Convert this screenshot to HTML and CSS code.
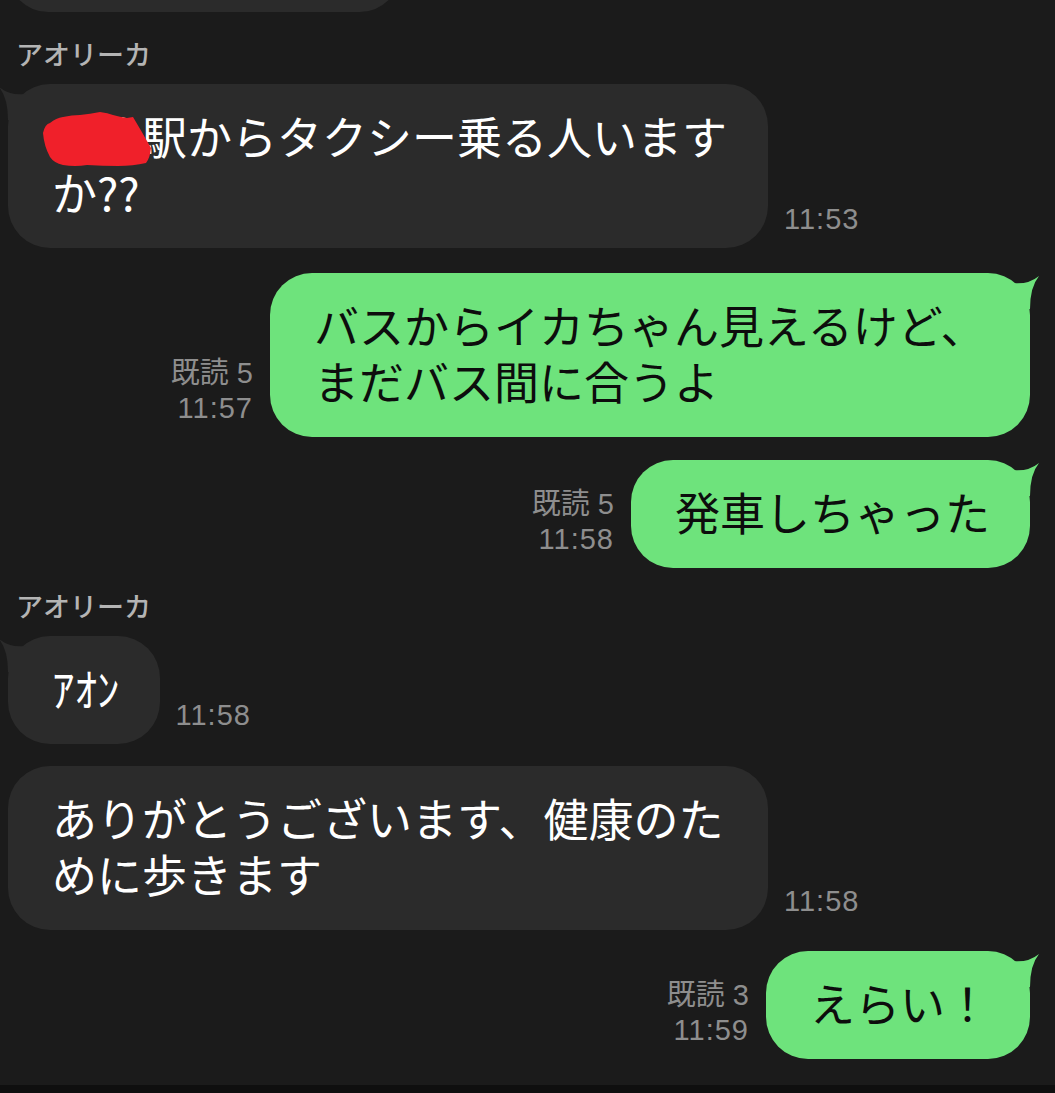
FILE: index.html
```html
<!DOCTYPE html>
<html lang="ja">
<head>
    <meta charset="UTF-8">
    <meta name="viewport" content="width=device-width, initial-scale=1.0">
    <title>トーク</title>
    <link rel="stylesheet" href="styles.css">
</head>
<body>
    <div class="chat">
        <div class="row left">
            <div class="bubble stub"></div>
        </div>

        <div class="name first">アオリーカ</div>
        <div class="row left">
            <div class="bubble">
                <svg class="tail tail-left" viewBox="0 0 50 40" width="50" height="40"><path d="M28 10 Q12 12 1 3 Q10 14 10 36 L28 36 Z"/></svg>
                ○○駅からタクシー乗る人いますか??
                <svg class="redact" viewBox="0 0 120 64" width="120" height="64"><path d="M5 25 Q7 16 12 15 Q18 10 25 9 Q34 7 42 7 Q52 6 62 4 Q70 5 75 7 Q82 9 89 10 L95 9 Q104 24 113 40 Q112 50 108 55 Q95 58 80 58 Q65 58 49 57 Q37 59 25 57 Q16 55 12 49 Q6 38 5 25 Z"/></svg>
            </div>
            <div class="meta">11:53</div>
        </div>

        <div class="row right gap-25">
            <div class="meta"><div class="read">既読 5</div><div>11:57</div></div>
            <div class="bubble green">
                <svg class="tail tail-right" viewBox="0 0 50 40" width="50" height="40"><path d="M22 10 Q38 12 49 3 Q40 14 40 36 L22 36 Z"/></svg>
                バスからイカちゃん見えるけど、まだバス間に合うよ
            </div>
        </div>

        <div class="row right gap-23">
            <div class="meta"><div class="read">既読 5</div><div>11:58</div></div>
            <div class="bubble green">
                <svg class="tail tail-right" viewBox="0 0 50 40" width="50" height="40"><path d="M22 10 Q38 12 49 3 Q40 14 40 36 L22 36 Z"/></svg>
                発車しちゃった
            </div>
        </div>

        <div class="name">アオリーカ</div>
        <div class="row left">
            <div class="bubble">
                <svg class="tail tail-left" viewBox="0 0 50 40" width="50" height="40"><path d="M28 10 Q12 12 1 3 Q10 14 10 36 L28 36 Z"/></svg>
                ｱｵﾝ
            </div>
            <div class="meta">11:58</div>
        </div>

        <div class="row left gap-22">
            <div class="bubble">ありがとうございます、健康のために歩きます</div>
            <div class="meta">11:58</div>
        </div>

        <div class="row right gap-21">
            <div class="meta"><div class="read">既読 3</div><div>11:59</div></div>
            <div class="bubble green">
                <svg class="tail tail-right" viewBox="0 0 50 40" width="50" height="40"><path d="M22 10 Q38 12 49 3 Q40 14 40 36 L22 36 Z"/></svg>
                えらい！
            </div>
        </div>
    </div>
    <div class="bottom-bar"></div>
</body>
</html>
```

FILE: styles.css
```css
html, body {
    margin: 0;
    background-color: #1b1b1b;
}
body {
    width: 1055px;
    height: 1093px;
    overflow: hidden;
    display: flex;
    flex-direction: column;
    font-family: "Noto Sans CJK JP", sans-serif;
}
.chat {
    flex: 1;
}
.row {
    display: flex;
    align-items: flex-end;
}
.row.left {
    padding-left: 8px;
}
.row.right {
    justify-content: flex-end;
    padding-right: 25px;
}
.gap-21 { margin-top: 21px; }
.gap-22 { margin-top: 22px; }
.gap-23 { margin-top: 23px; }
.gap-25 { margin-top: 25px; }

.name {
    margin: 23px 0 15px 16px;
    font-size: 27px;
    line-height: 30px;
    font-weight: 500;
    color: #b4b4b4;
}
.name.first {
    margin-top: 27px;
}

.bubble {
    position: relative;
    box-sizing: border-box;
    max-width: 760px;
    padding: 24px 40px 28px 44px;
    border-radius: 42px;
    background-color: #2b2b2b;
    color: #fff;
    font-size: 45px;
    line-height: 56px;
}
.bubble.green {
    background-color: #6ee37c;
    color: #0d0d0d;
}
.bubble.stub {
    width: 392px;
    height: 80px;
    margin-top: -68px;
    padding: 0;
}

.tail {
    position: absolute;
    top: 0;
}
.tail-left {
    left: -10px;
    fill: #2b2b2b;
}
.tail-right {
    right: -10px;
    fill: #6ee37c;
}

.redact {
    position: absolute;
    left: 30px;
    top: 24px;
    fill: #f0202a;
}

.meta {
    flex-shrink: 0;
    padding-bottom: 11px;
    font-family: "Liberation Sans", "Noto Sans CJK JP", sans-serif;
    font-size: 29px;
    line-height: 35px;
    letter-spacing: 1px;
    color: #8e8e8e;
}
.meta .read {
    letter-spacing: 0;
}
.row.left .meta {
    padding-left: 16px;
}
.row.right .meta {
    padding-right: 17px;
    text-align: right;
}

.bottom-bar {
    height: 8px;
    background-color: #0f0f0f;
}
```
